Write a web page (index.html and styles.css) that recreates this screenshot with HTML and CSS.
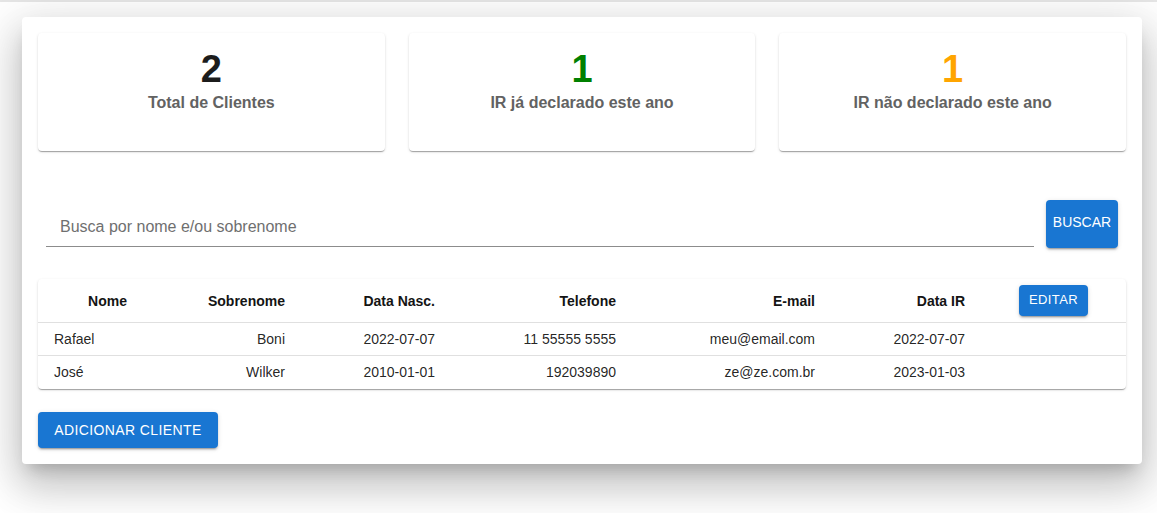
FILE: index.html
```html
<!DOCTYPE html>
<html lang="pt-BR">
<head>
<meta charset="utf-8">
<title>Clientes</title>
<link rel="stylesheet" href="styles.css">
</head>
<body>
<div class="topline"></div>
<main class="panel">
  <section class="stats">
    <div class="card">
      <div class="num">2</div>
      <div class="label">Total de Clientes</div>
    </div>
    <div class="card">
      <div class="num green">1</div>
      <div class="label">IR já declarado este ano</div>
    </div>
    <div class="card">
      <div class="num orange">1</div>
      <div class="label">IR não declarado este ano</div>
    </div>
  </section>

  <section class="search">
    <div class="field">
      <input type="text" placeholder="Busca por nome e/ou sobrenome">
    </div>
    <button class="btn btn-search">BUSCAR</button>
  </section>

  <section class="table-wrap">
    <table class="clients">
      <colgroup>
        <col class="c1"><col class="c2"><col class="c3"><col class="c4"><col class="c5"><col class="c6"><col class="c7">
      </colgroup>
      <thead>
        <tr>
          <th class="center">Nome</th>
          <th class="right">Sobrenome</th>
          <th class="right">Data Nasc.</th>
          <th class="right">Telefone</th>
          <th class="right">E-mail</th>
          <th class="right">Data IR</th>
          <th class="center"><button class="btn btn-small">EDITAR</button></th>
        </tr>
      </thead>
      <tbody>
        <tr>
          <td>Rafael</td>
          <td class="right">Boni</td>
          <td class="right">2022-07-07</td>
          <td class="right">11 55555 5555</td>
          <td class="right">meu@email.com</td>
          <td class="right">2022-07-07</td>
          <td></td>
        </tr>
        <tr>
          <td>José</td>
          <td class="right">Wilker</td>
          <td class="right">2010-01-01</td>
          <td class="right">192039890</td>
          <td class="right">ze@ze.com.br</td>
          <td class="right">2023-01-03</td>
          <td></td>
        </tr>
      </tbody>
    </table>
  </section>

  <div class="actions">
    <button class="btn btn-add">ADICIONAR CLIENTE</button>
  </div>
</main>
</body>
</html>
```

FILE: styles.css
```css
* { box-sizing: border-box; }

html, body {
  margin: 0;
  padding: 0;
  background: #ffffff;
  font-family: "Liberation Sans", Arial, sans-serif;
  color: rgba(0, 0, 0, 0.87);
}

body {
  padding-bottom: 49px;
}

.topline {
  height: 2px;
  background: #e6e6e6;
}

.panel {
  width: 1120px;
  margin: 15px 0 0 22px;
  padding: 16px;
  background: #fff;
  border-radius: 4px;
  box-shadow: 0px 11px 15px -7px rgba(0,0,0,0.2),
              0px 24px 38px 3px rgba(0,0,0,0.14),
              0px 9px 46px 8px rgba(0,0,0,0.12);
}

.stats {
  display: grid;
  grid-template-columns: repeat(3, 1fr);
  gap: 24px;
}

.card {
  height: 118px;
  border-radius: 4px;
  background: #fff;
  box-shadow: 0px 2px 1px -1px rgba(0,0,0,0.2),
              0px 1px 1px 0px rgba(0,0,0,0.14),
              0px 1px 3px 0px rgba(0,0,0,0.12);
  text-align: center;
  padding-top: 14px;
}

.num {
  font-size: 38px;
  font-weight: bold;
  line-height: 44px;
  color: #1c1c1c;
}
.num.green { color: #008000; }
.num.orange { color: #ffa500; }

.label {
  font-size: 16px;
  font-weight: bold;
  line-height: 20px;
  color: #626262;
  margin-top: 2px;
}

.search {
  display: flex;
  align-items: flex-end;
  gap: 12px;
  margin: 48px 8px 0 8px;
}

.field {
  flex: 1;
  border-bottom: 1px solid #8c8c8c;
  height: 48px;
  display: flex;
  align-items: flex-end;
}

.field input {
  width: 100%;
  border: none;
  outline: none;
  background: transparent;
  font-family: inherit;
  font-size: 16px;
  color: rgba(0,0,0,0.87);
  padding: 0 14px 10px 14px;
  line-height: 19px;
}
.field input::placeholder { color: #6f6f6f; opacity: 1; }

.btn {
  border: none;
  background: #1976d2;
  color: #fff;
  font-family: inherit;
  border-radius: 4px;
  letter-spacing: 0.02857em;
  cursor: pointer;
  box-shadow: 0px 3px 1px -2px rgba(0,0,0,0.2),
              0px 2px 2px 0px rgba(0,0,0,0.14),
              0px 1px 5px 0px rgba(0,0,0,0.12);
}

.btn-search {
  width: 72px;
  height: 48px;
  font-size: 14px;
  padding: 0 0 4px 0;
  letter-spacing: 0;
  margin-bottom: -1px;
}

.btn-small {
  height: 31px;
  font-size: 13px;
  padding: 0 10px 2px 10px;
  letter-spacing: 0.03em;
}

.btn-add {
  height: 36px;
  font-size: 14px;
  padding: 0 16px;
  width: 180px;
}

.table-wrap {
  margin-top: 32px;
  border-radius: 4px;
  background: #fff;
  box-shadow: 0px 2px 1px -1px rgba(0,0,0,0.2),
              0px 1px 1px 0px rgba(0,0,0,0.14),
              0px 1px 3px 0px rgba(0,0,0,0.12);
  overflow: hidden;
}

.clients {
  width: 100%;
  border-collapse: collapse;
  table-layout: fixed;
  font-size: 14px;
}

.c1 { width: 139px; }
.c2 { width: 124px; }
.c3 { width: 150px; }
.c4 { width: 181px; }
.c5 { width: 199px; }
.c6 { width: 150px; }
.c7 { width: 145px; }

.clients th {
  font-weight: bold;
  color: #141414;
  height: 43px;
  padding: 6px 16px;
  border-bottom: 1px solid #e0e0e0;
  line-height: 20px;
}

.clients td {
  height: 33px;
  padding: 6px 16px;
  line-height: 20px;
  color: rgba(0,0,0,0.87);
  border-bottom: 1px solid #e0e0e0;
  text-align: left;
}

.clients tbody tr:last-child td { border-bottom: none; }

.clients .right { text-align: right; }
.clients .center { text-align: center; }

.actions {
  margin-top: 23px;
  display: flex;
}
```
